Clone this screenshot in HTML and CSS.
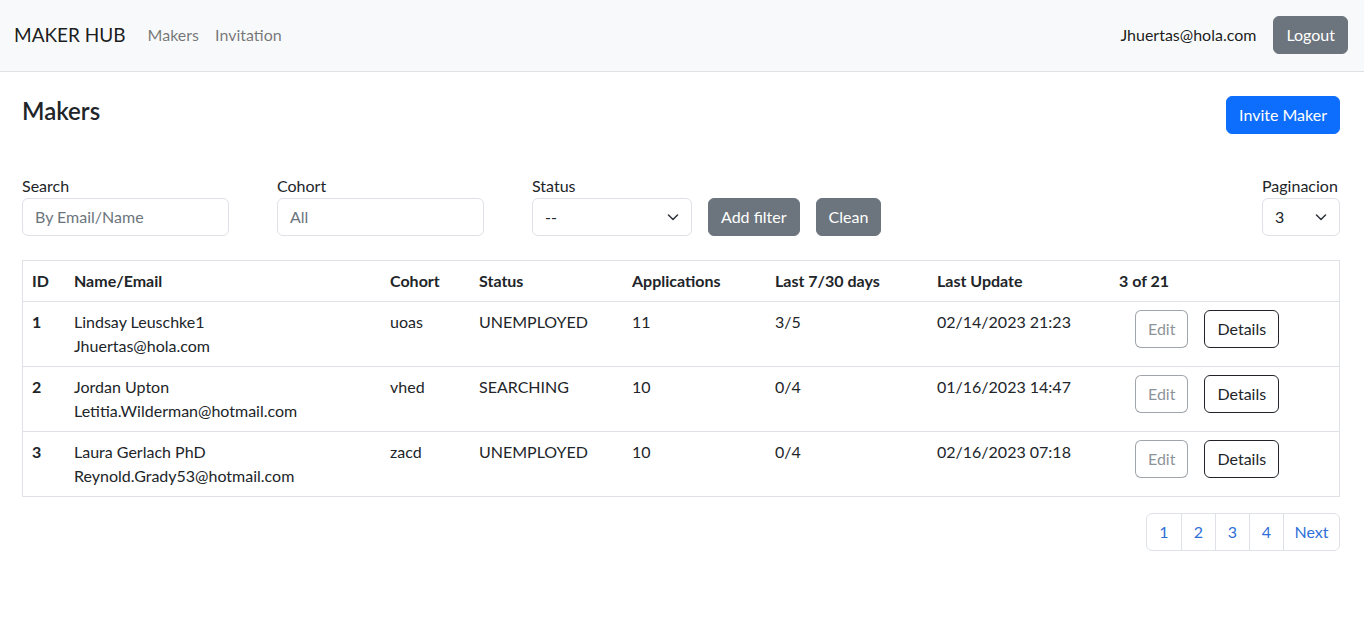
FILE: index.html
```html
<!DOCTYPE html>
<html lang="en">
<head>
<meta charset="utf-8">
<title>Maker Hub</title>
<link rel="stylesheet" href="styles.css">
</head>
<body>
<nav class="navbar">
  <div class="nav-left">
    <span class="brand">MAKER HUB</span>
    <a class="nav-link">Makers</a>
    <a class="nav-link">Invitation</a>
  </div>
  <div class="nav-right">
    <span class="user">Jhuertas@hola.com</span>
    <button class="btn btn-secondary">Logout</button>
  </div>
</nav>
<main class="page">
  <div class="page-head">
    <h4 class="title">Makers</h4>
    <button class="btn btn-primary">Invite Maker</button>
  </div>
  <div class="filters">
    <div class="filter-left">
      <div class="field w-207">
        <label class="label">Search</label>
        <div class="input placeholder">By Email/Name</div>
      </div>
      <div class="field w-207">
        <label class="label">Cohort</label>
        <div class="input placeholder">All</div>
      </div>
      <div class="field w-160">
        <label class="label">Status</label>
        <div class="input select"><span>--</span><svg width="16" height="16" viewBox="0 0 16 16"><path d="M3.5 6l4.5 4.5L12.5 6" fill="none" stroke="#343a40" stroke-width="1.6" stroke-linecap="round" stroke-linejoin="round"/></svg></div>
      </div>
      <button class="btn btn-secondary">Add filter</button>
      <button class="btn btn-secondary">Clean</button>
    </div>
    <div class="field w-78">
      <label class="label">Paginacion</label>
      <div class="input select"><span>3</span><svg width="16" height="16" viewBox="0 0 16 16"><path d="M3.5 6l4.5 4.5L12.5 6" fill="none" stroke="#343a40" stroke-width="1.6" stroke-linecap="round" stroke-linejoin="round"/></svg></div>
    </div>
  </div>
  <div class="table-wrap">
    <table class="table">
      <colgroup>
        <col class="c-id"><col class="c-name"><col class="c-cohort"><col class="c-status"><col class="c-apps"><col class="c-last"><col class="c-upd"><col class="c-act">
      </colgroup>
      <thead>
        <tr><th>ID</th><th>Name/Email</th><th>Cohort</th><th>Status</th><th>Applications</th><th>Last 7/30 days</th><th>Last Update</th><th>3 of 21</th></tr>
      </thead>
      <tbody>
        <tr>
          <th>1</th>
          <td>Lindsay Leuschke1<br>Jhuertas@hola.com</td>
          <td>uoas</td><td>UNEMPLOYED</td><td>11</td><td>3/5</td><td>02/14/2023 21:23</td>
          <td><div class="actions"><button class="btn btn-edit">Edit</button><button class="btn btn-dark-outline">Details</button></div></td>
        </tr>
        <tr>
          <th>2</th>
          <td>Jordan Upton<br>Letitia.Wilderman@hotmail.com</td>
          <td>vhed</td><td>SEARCHING</td><td>10</td><td>0/4</td><td>01/16/2023 14:47</td>
          <td><div class="actions"><button class="btn btn-edit">Edit</button><button class="btn btn-dark-outline">Details</button></div></td>
        </tr>
        <tr>
          <th>3</th>
          <td>Laura Gerlach PhD<br>Reynold.Grady53@hotmail.com</td>
          <td>zacd</td><td>UNEMPLOYED</td><td>10</td><td>0/4</td><td>02/16/2023 07:18</td>
          <td><div class="actions"><button class="btn btn-edit">Edit</button><button class="btn btn-dark-outline">Details</button></div></td>
        </tr>
      </tbody>
    </table>
  </div>
  <div class="pager-row">
    <ul class="pagination">
      <li class="page-item w-34">1</li>
      <li class="page-item w-34">2</li>
      <li class="page-item w-34">3</li>
      <li class="page-item w-34">4</li>
      <li class="page-item w-56">Next</li>
    </ul>
  </div>
</main>
</body>
</html>
```
FILE: styles.css
```css
* { box-sizing: border-box; }
html, body { margin: 0; padding: 0; }
body {
  font-family: Lato, "Open Sans", sans-serif;
  font-size: 16px;
  line-height: 24px;
  color: #212529;
  background: #fff;
}
.navbar {
  height: 72px;
  background: #f8f9fa;
  border-bottom: 1px solid #dee2e6;
  display: flex;
  align-items: center;
  justify-content: space-between;
  padding: 0 16px 1px 14px;
}
.nav-left { display: flex; align-items: center; }
.brand { font-size: 19px; line-height: 30px; color: rgba(0,0,0,.9); margin-right: 14px; }
.nav-link { color: rgba(0,0,0,.55); padding: 8px; }
.nav-right { display: flex; align-items: center; gap: 17px; }
.user { color: rgba(0,0,0,.9); }
.btn {
  font-family: inherit;
  font-size: 16px;
  line-height: 24px;
  height: 38px;
  padding: 6px 12px;
  border-radius: 6px;
  border: 1px solid transparent;
  cursor: pointer;
}
.btn-secondary { background: #6c757d; border-color: #6c757d; color: #fff; }
.btn-primary { background: #0d6efd; border-color: #0d6efd; color: #fff; }
.btn-edit { background: #fff; border-color: rgba(108,117,125,.65); color: rgba(108,117,125,.8); }
.btn-dark-outline { background: #fff; border-color: #212529; color: #212529; }
.page { padding: 0 24px 0 22px; }
.page-head {
  display: flex;
  justify-content: space-between;
  align-items: flex-start;
  margin-top: 24px;
}
.title { margin: 0; font-size: 24px; line-height: 29px; font-weight: 600; }
.filters {
  display: flex;
  justify-content: space-between;
  align-items: flex-end;
  margin-top: 40px;
}
.filter-left { display: flex; align-items: flex-end; gap: 16px; }
.filter-left .field { margin-right: 32px; }
.filter-left .field.w-160 { margin-right: 0; }
.field { display: flex; flex-direction: column; }
.w-207 { width: 207px; }
.w-160 { width: 160px; }
.w-78 { width: 78px; }
.label { display: block; line-height: 24px; }
.input {
  height: 38px;
  border: 1px solid #dee2e6;
  border-radius: 6px;
  padding: 6px 12px;
  line-height: 24px;
  background: #fff;
}
.placeholder { color: #6c757d; }
.select { display: flex; justify-content: space-between; align-items: center; padding-right: 10px; }
.select svg { flex: none; }
.table-wrap { margin-top: 24px; border: 1px solid #dee2e6; }
.table { width: 100%; border-collapse: collapse; table-layout: fixed; }
.table th, .table td {
  text-align: left;
  vertical-align: top;
  padding: 8px 9px;
  line-height: 24px;
}
.table thead th { font-weight: 700; border-bottom: 1px solid #dee2e6; height: 40px; padding-top: 8px; padding-bottom: 7px; }
.table tbody tr + tr th, .table tbody tr + tr td { border-top: 1px solid #dee2e6; }
.table tbody th { font-weight: 700; }
.c-id { width: 42px; }
.c-name { width: 316px; }
.c-cohort { width: 89px; }
.c-status { width: 153px; }
.c-apps { width: 143px; }
.c-last { width: 162px; }
.c-upd { width: 182px; }
.actions { display: flex; gap: 16px; padding-left: 16px; }
.pager-row { display: flex; justify-content: flex-end; margin-top: 16px; }
.pagination {
  display: flex;
  list-style: none;
  margin: 0;
  padding: 0;
  border: 1px solid #dee2e6;
  border-radius: 6px;
}
.page-item {
  height: 36px;
  display: flex;
  align-items: center;
  justify-content: center;
  color: #2f6fd8;
}
.page-item + .page-item { border-left: 1px solid #dee2e6; }
.w-34 { width: 34px; }
.w-56 { width: 56px; }
```
